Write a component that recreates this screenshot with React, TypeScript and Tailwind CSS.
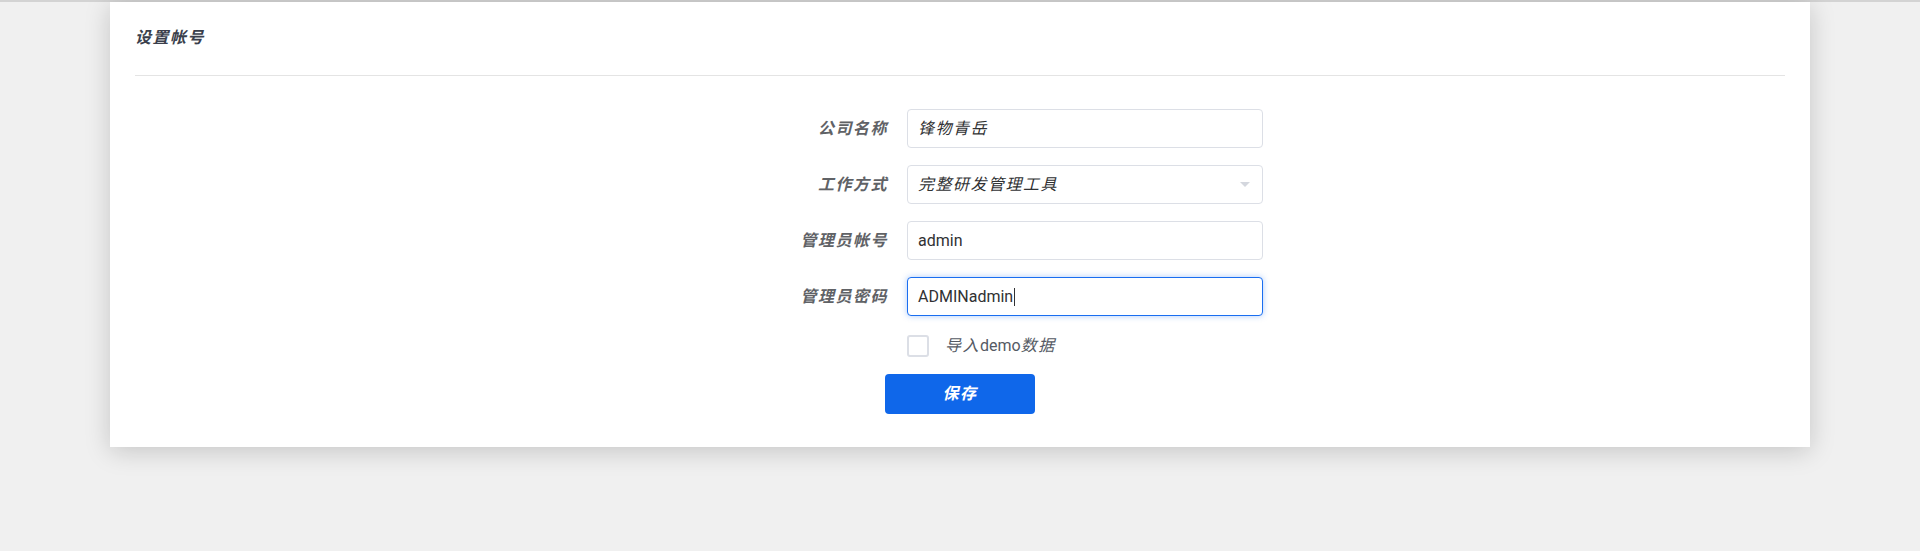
const font = { fontFamily: 'Roboto, "Noto Sans CJK SC", sans-serif' };

const labelClass = 'w-[231px] shrink-0 text-right text-[16px] font-bold italic tracking-[1.5px] text-[#606266]';
const inputClass =
  'ml-[19px] flex h-[39px] w-[356px] items-center rounded-[4px] border border-[#dcdfe6] bg-white px-[10px] text-[16px] text-[#303133]';

function Cjk({ children }: { children: string }) {
  return <span className="italic tracking-[1.5px]">{children}</span>;
}

export default function App() {
  return (
    <div className="min-h-[551px] bg-[#f0f0f0]" style={font}>
      <div className="h-[2px] bg-[#d3d3d3]" />
      <div className="mx-[110px] bg-white px-[25px] pb-[33px] shadow-[0_4px_24px_rgba(0,0,0,0.18)]">
        <div className="flex h-[74px] items-center border-b border-[#e4e4e4] pb-[2px]">
          <span className="text-[16px] font-bold italic tracking-[1.5px] text-[#3a3f4c]">设置帐号</span>
        </div>

        <div className="mx-auto mt-[33px] flex w-[606px] flex-col">
          <div className="flex flex-col gap-[17px]">
            <div className="flex items-center">
              <div className={labelClass}>公司名称</div>
              <div className={inputClass}>
                <Cjk>锋物青岳</Cjk>
              </div>
            </div>
            <div className="flex items-center">
              <div className={labelClass}>工作方式</div>
              <div className={`${inputClass} justify-between`}>
                <Cjk>完整研发管理工具</Cjk>
                <svg width="10" height="6" viewBox="0 0 10 6" className="mr-[2px]">
                  <path d="M0 0 L10 0 L5 5 Z" fill="#d4d7de" />
                </svg>
              </div>
            </div>
            <div className="flex items-center">
              <div className={labelClass}>管理员帐号</div>
              <div className={inputClass}>admin</div>
            </div>
            <div className="flex items-center">
              <div className={labelClass}>管理员密码</div>
              <div className={`${inputClass} !border-[#1a6ef0] shadow-[0_0_6px_rgba(26,110,240,0.35)]`}>
                ADMINadmin
                <span className="ml-px inline-block h-[18px] w-px bg-[#303133]" />
              </div>
            </div>
          </div>

          <div className="ml-[250px] mt-[19px] flex h-[22px] items-center">
            <div className="h-[22px] w-[22px] rounded-[3px] border-2 border-[#dcdfe6] bg-white" />
            <span className="ml-[16px] text-[16px] text-[#555a64]">
              <Cjk>导入</Cjk>demo<Cjk>数据</Cjk>
            </span>
          </div>

          <div className="mt-[17px] flex justify-center">
            <button className="h-[40px] w-[150px] rounded-[4px] bg-[#0f67ea] text-[16px] font-bold italic tracking-[1.5px] text-white">
              保存
            </button>
          </div>
        </div>
      </div>
    </div>
  );
}
